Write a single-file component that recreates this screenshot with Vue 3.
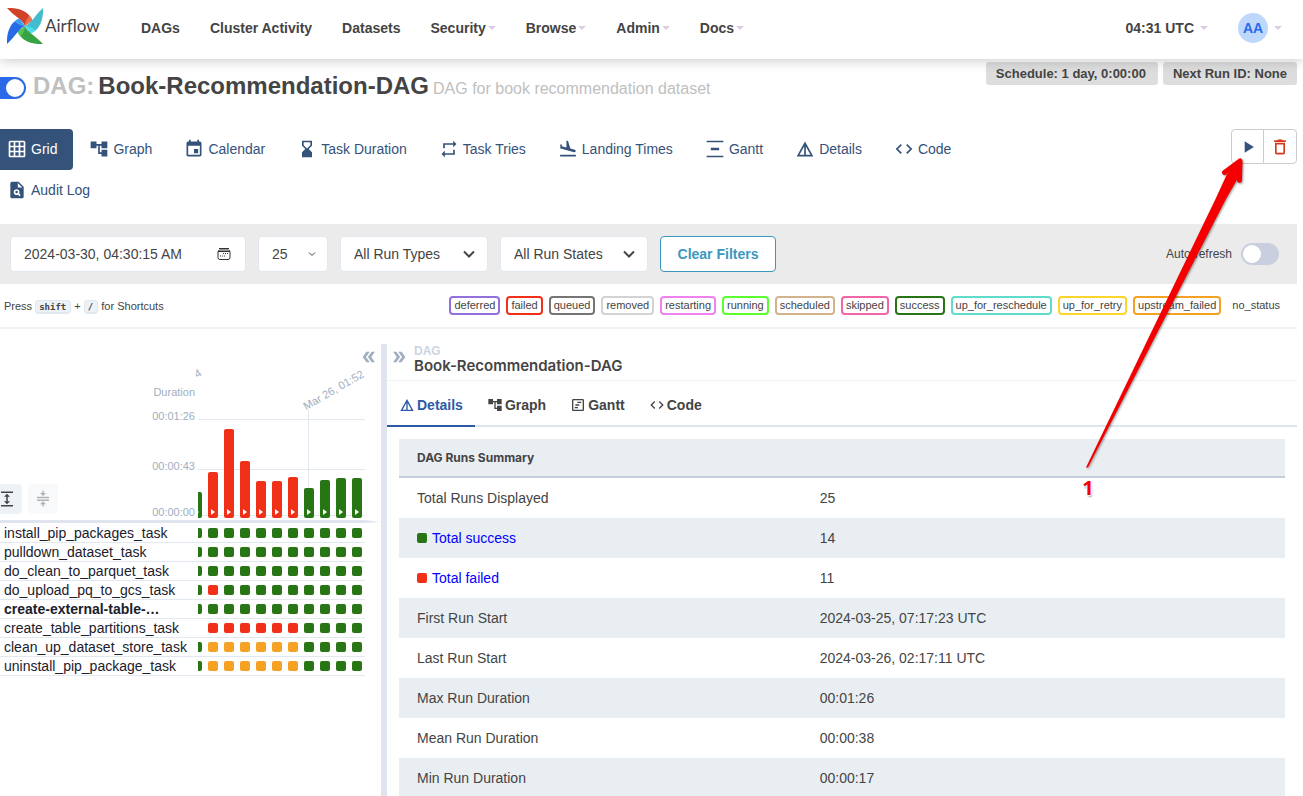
<script setup>
import { ref } from 'vue'

const icons = {
  grid: 'M20 2H4c-1.1 0-2 .9-2 2v16c0 1.1.9 2 2 2h16c1.1 0 2-.9 2-2V4c0-1.1-.9-2-2-2zM8 20H4v-4h4v4zm0-6H4v-4h4v4zm0-6H4V4h4v4zm6 12h-4v-4h4v4zm0-6h-4v-4h4v4zm0-6h-4V4h4v4zm6 12h-4v-4h4v4zm0-6h-4v-4h4v4zm0-6h-4V4h4v4z',
  tree: 'M22 11V3h-7v3H9V3H2v8h7V8h2v10h4v3h7v-8h-7v3h-2V8h2v3z',
  event: 'M17 12h-5v5h5v-5zM16 1v2H8V1H6v2H5c-1.11 0-1.99.9-1.99 2L3 19c0 1.1.89 2 2 2h14c1.1 0 2-.9 2-2V5c0-1.1-.9-2-2-2h-1V1h-2zm3 18H5V8h14v11z',
  hourglass: 'M18 22l-.01-6L14 12l3.99-4.01L18 2H6v6l4 4-4 3.99V22h12zM8 7.5V4h8v3.5l-4 4-4-4z',
  repeat: 'M7 7h10v3l4-4-4-4v3H5v6h2V7zm10 10H7v-3l-4 4 4 4v-3h12v-6h-2v4z',
  landing: 'M2.5 19h19v2h-19zm7.18-5.73l4.35 1.16 5.31 1.42c.8.21 1.62-.26 1.84-1.06.21-.8-.26-1.62-1.06-1.84l-5.31-1.42-2.76-9.02L10.12 2v8.28L5.15 8.95l-.93-2.32-1.45-.39v5.17l1.6.43 5.31 1.43z',
  distribute: 'M22 2v2H2V2h20zM7 10.5v3h10v-3H7zM2 20v2h20v-2H2z',
  details: 'M12 3 2 21h20L12 3zm1 5.92L18.6 19H13V8.92zm-2 0V19H5.4L11 8.92z',
  code: 'M9.4 16.6L4.8 12l4.6-4.6L8 6l-6 6 6 6 1.4-1.4zm5.2 0l4.6-4.6-4.6-4.6L16 6l6 6-6 6-1.4-1.4z',
  audit: 'M14 2H6c-1.1 0-2 .9-2 2v16c0 1.1.89 2 1.99 2H18c1.1 0 2-.9 2-2V8l-6-6zm1.04 17.45l-1.88-1.88c-1.33.71-3.01.53-4.13-.59-1.37-1.37-1.37-3.58 0-4.95s3.58-1.37 4.95 0c1.12 1.12 1.31 2.8.59 4.13l1.88 1.88-1.41 1.41zM13 9V3.5L18.5 9H13zM11.5 13a1.5 1.5 0 1 0 .01 3 1.5 1.5 0 0 0-.01-3z',
  play: 'M8 5v14l11-7z',
  trash: 'M6 19c0 1.1.9 2 2 2h8c1.1 0 2-.9 2-2V7H6v12zM8 9h8v10H8V9zm7.5-5l-1-1h-5l-1 1H5v2h14V4z',
  forward: 'M15.5 5H11l5 7-5 7h4.5l5-7zM8.5 5H4l5 7-5 7h4.5l5-7z',
  back: 'M8.5 5H13l-5 7 5 7H8.5l-5-7zM15.5 5H20l-5 7 5 7h-4.5l-5-7z',
  expand: 'M4 20h16v2H4zM4 2h16v2H4zm9 7h3l-4-4-4 4h3v6H8l4 4 4-4h-3z',
  compress: 'M8 19h3v3h2v-3h3l-4-4-4 4zm8-15h-3V1h-2v3H8l4 4 4-4zM4 9v2h16V9H4zM4 12.500h16v2H4z',
  timeline: 'M19 5v14H5V5h14m0-2H5c-1.100 0-2 .9-2 2v14c0 1.100.9 2 2 2h14c1.100 0 2-.9 2-2V5c0-1.100-.9-2-2-2zM11 7h6v2h-6zM8 11h6v2H8zM7 15h5v2H7z',
}

const menu = [
  { label: 'DAGs' },
  { label: 'Cluster Activity' },
  { label: 'Datasets' },
  { label: 'Security', caret: true },
  { label: 'Browse', caret: true },
  { label: 'Admin', caret: true },
  { label: 'Docs', caret: true },
]

const views = [
  { label: 'Grid', icon: 'grid', active: true },
  { label: 'Graph', icon: 'tree' },
  { label: 'Calendar', icon: 'event' },
  { label: 'Task Duration', icon: 'hourglass' },
  { label: 'Task Tries', icon: 'repeat' },
  { label: 'Landing Times', icon: 'landing' },
  { label: 'Gantt', icon: 'distribute' },
  { label: 'Details', icon: 'details' },
  { label: 'Code', icon: 'code' },
  { label: 'Audit Log', icon: 'audit' },
]

const states = [
  ['deferred', 'mediumpurple'],
  ['failed', '#f03018'],
  ['queued', '#757575'],
  ['removed', 'lightgrey'],
  ['restarting', 'violet'],
  ['running', '#5cff2e'],
  ['scheduled', 'tan'],
  ['skipped', '#f266a8'],
  ['success', '#277515'],
  ['up_for_reschedule', '#5fdccb'],
  ['up_for_retry', '#fbd52b'],
  ['upstream_failed', '#f5a123'],
  ['no_status', 'transparent'],
]

const s = 'success'
const f = 'failed'
const u = 'upstream'
const runs = [
  [26, s], [46, f], [89, f], [57, f], [37, f], [37, f], [41, f], [30, s], [38, s], [40, s], [40, s],
]
const allGood = [s, s, s, s, s, s, s, s, s, s, s]
const tasks = [
  { name: 'install_pip_packages_task', cells: allGood },
  { name: 'pulldown_dataset_task', cells: allGood },
  { name: 'do_clean_to_parquet_task', cells: allGood },
  { name: 'do_upload_pq_to_gcs_task', cells: [s, f, s, s, s, s, s, s, s, s, s] },
  { name: 'create-external-table-…', cells: allGood, group: true },
  { name: 'create_table_partitions_task', cells: ['none', f, f, f, f, f, f, s, s, s, s] },
  { name: 'clean_up_dataset_store_task', cells: [s, u, u, u, u, u, u, s, s, s, s] },
  { name: 'uninstall_pip_package_task', cells: [s, u, u, u, u, u, u, s, s, s, s] },
]

const panels = [
  { label: 'Details', icon: 'details', active: true },
  { label: 'Graph', icon: 'tree' },
  { label: 'Gantt', icon: 'timeline' },
  { label: 'Code', icon: 'code' },
]

const summary = [
  { label: 'Total Runs Displayed', value: '25' },
  { label: 'Total success', value: '14', state: s },
  { label: 'Total failed', value: '11', state: f },
  { label: 'First Run Start', value: '2024-03-25, 07:17:23 UTC' },
  { label: 'Last Run Start', value: '2024-03-26, 02:17:11 UTC' },
  { label: 'Max Run Duration', value: '00:01:26' },
  { label: 'Mean Run Duration', value: '00:00:38' },
  { label: 'Min Run Duration', value: '00:00:17' },
]

const baseDate = ref('2024-03-30, 04:30:15 AM')
const enabled = ref(true)
const autoRefresh = ref(false)
</script>

<template>
  <div class="page">
    <header class="navbar">
      <a class="brand" href="#" aria-label="Airflow">
        <svg class="logo" viewBox="0 0 36 36" aria-hidden="true">
          <path fill="#d14328" d="M0 0C9-.5 18 2 22.500 7.500 21 11 20 14 18 18 15 11 8 9 0 0z" />
          <path fill="#ee6f51" d="M22.500 7.500C25 10 25.500 12 25 13L18 18C18 14 20 10 22.500 7.500z" />
          <path fill="#43bccd" d="M36 0C36.500 9 34 18 28.500 22.500 25 21 22 20 18 18 25 15 27 8 36 0z" />
          <path fill="#4adcf0" d="M28.500 22.500C26 25 24 25.500 23 25L18 18C22 18 26 20 28.500 22.500z" />
          <path fill="#37a344" d="M36 36C27 36.500 18 34 13.500 28.500 15 25 16 22 18 18 21 25 28 27 36 36z" />
          <path fill="#51c455" d="M13.500 28.500C11 26 10.500 24 11 23L18 18C18 22 16 26 13.500 28.500z" />
          <path fill="#2869e6" d="M0 36C-.5 27 2 18 7.500 13.500 11 15 14 16 18 18 11 21 9 28 0 36z" />
          <path fill="#3f9cf0" d="M7.500 13.500C10 11 12 10.500 13 11L18 18C14 18 10 16 7.500 13.500z" />
        </svg>
        <span class="brand-name">Airflow</span>
      </a>
      <nav class="menu">
        <a v-for="m in menu" :key="m.label" href="#">{{ m.label }}<i v-if="m.caret" class="caret"></i></a>
      </nav>
      <nav class="menu user-menu">
        <a href="#">04:31 UTC <i class="caret far"></i></a>
        <a href="#" class="user"><span class="avatar">AA</span><i class="caret far"></i></a>
      </nav>
    </header>

    <div class="content">
      <section class="title-row">
        <input v-model="enabled" class="switch dag-switch" type="checkbox" aria-label="Pause/Unpause DAG" />
        <h1>
          <span class="kind">DAG:</span>
          <span>Book-Recommendation-DAG</span>
          <small>DAG for book recommendation dataset</small>
        </h1>
        <div class="tags">
          <a href="#">Schedule: 1 day, 0:00:00</a>
          <a href="#">Next Run ID: None</a>
        </div>
      </section>

      <section class="view-row">
        <ul class="views">
          <li v-for="v in views" :key="v.label">
            <a href="#" :class="{ active: v.active }">
              <svg class="icon" viewBox="0 0 24 24" aria-hidden="true"><path :d="icons[v.icon]" /></svg>{{ v.label }}
            </a>
          </li>
        </ul>
        <div class="actions">
          <button type="button" aria-label="Trigger DAG">
            <svg class="icon" viewBox="0 0 24 24" aria-hidden="true"><path :d="icons.play" /></svg>
          </button>
          <button type="button" class="danger" aria-label="Delete DAG">
            <svg class="icon" viewBox="0 0 24 24" aria-hidden="true"><path :d="icons.trash" /></svg>
          </button>
        </div>
      </section>

      <section class="filters">
        <div class="field date">
          <input v-model="baseDate" type="text" aria-label="Base date" />
          <svg class="calendar" viewBox="0 0 14 14" aria-hidden="true">
            <path fill="none" stroke="#333" d="M2 1.500h10M1 4.500h12M3 3h8a2 2 0 0 1 2 2v5.500a2 2 0 0 1-2 2H3a2 2 0 0 1-2-2V5a2 2 0 0 1 2-2z" />
            <path fill="#333" d="M6 6h1v1H6zM8 6h1v1H8zM10 6h1v1h-1zM3 8.500h1v1H3zM5 8.500h1v1H5zM7 8.500h1v1H7z" />
          </svg>
        </div>
        <div class="field count">
          <select aria-label="Number of runs"><option>25</option></select>
          <svg class="chevron small" viewBox="0 0 12 12" aria-hidden="true"><path d="M3 4.500l3 3 3-3" /></svg>
        </div>
        <div class="field">
          <select aria-label="Run types"><option>All Run Types</option></select>
          <svg class="chevron" viewBox="0 0 12 12" aria-hidden="true"><path d="M1 3.500l5 5 5-5" /></svg>
        </div>
        <div class="field">
          <select aria-label="Run states"><option>All Run States</option></select>
          <svg class="chevron" viewBox="0 0 12 12" aria-hidden="true"><path d="M1 3.500l5 5 5-5" /></svg>
        </div>
        <button type="button" class="clear">Clear Filters</button>
        <label class="auto">Auto-refresh <input v-model="autoRefresh" class="switch" type="checkbox" /></label>
      </section>

      <section class="legend">
        <p>Press <kbd>shift</kbd> + <kbd>/</kbd> for Shortcuts</p>
        <ul>
          <li v-for="[name, color] in states" :key="name" :style="{ borderColor: color }">{{ name }}</li>
        </ul>
      </section>

      <main class="main">
        <section class="grid-panel">
          <button type="button" class="collapse" aria-label="Hide details">
            <svg viewBox="0 0 24 24" aria-hidden="true"><path :d="icons.back" /></svg>
          </button>
          <div class="chart-row">
            <div class="group-buttons">
              <button type="button" aria-label="Expand all task groups">
                <svg viewBox="0 0 24 24" aria-hidden="true"><path :d="icons.expand" /></svg>
              </button>
              <button type="button" disabled aria-label="Collapse all task groups">
                <svg viewBox="0 0 24 24" aria-hidden="true"><path :d="icons.compress" /></svg>
              </button>
            </div>
            <div class="axis">
              <span>Duration</span>
              <span>00:01:26</span>
              <span>00:00:43</span>
              <span>00:00:00</span>
            </div>
            <div class="chart">
              <i class="line top"></i><i class="line mid"></i><i class="line low"></i><i class="tick"></i>
              <span class="date-label">Mar 26, 01:52</span>
              <span class="date-label earlier">4</span>
              <div class="bars">
                <div v-for="(r, i) in runs" :key="i" class="slot">
                  <div class="bar" :class="r[1]" :style="{ height: r[0] + 'px' }">
                    <svg viewBox="0 0 4 6" aria-hidden="true"><path d="M0 0l4 3-4 3z" /></svg>
                  </div>
                </div>
              </div>
            </div>
          </div>
          <svg class="shadow-line" viewBox="0 0 381 4" preserveAspectRatio="none" aria-hidden="true">
            <path d="M0 0h365l15 2-15 1H0z" />
          </svg>
          <table class="tasks">
            <tbody>
              <tr v-for="t in tasks" :key="t.name">
                <th scope="row" :class="{ group: t.group }">{{ t.name }}</th>
                <td>
                  <div class="cells">
                    <span v-for="(c, i) in t.cells" :key="i" class="slot"><i class="cell" :class="c"></i></span>
                  </div>
                </td>
              </tr>
            </tbody>
          </table>
        </section>

        <section class="detail-panel">
          <div class="crumb">
            <button type="button" class="collapse" aria-label="Hide grid">
              <svg viewBox="0 0 24 24" aria-hidden="true"><path :d="icons.forward" /></svg>
            </button>
            <div>
              <span class="crumb-kind">DAG</span>
              <h2>Book-Recommendation-DAG</h2>
            </div>
          </div>
          <div class="panel-tabs" role="tablist">
            <button v-for="p in panels" :key="p.label" type="button" role="tab" :aria-selected="!!p.active" :class="{ active: p.active }">
              <svg viewBox="0 0 24 24" aria-hidden="true"><path :d="icons[p.icon]" /></svg>{{ p.label }}
            </button>
          </div>
          <table class="summary">
            <thead>
              <tr><th scope="col" colspan="2">DAG Runs Summary</th></tr>
            </thead>
            <tbody>
              <tr v-for="row in summary" :key="row.label">
                <td>
                  <a v-if="row.state" href="#"><i class="cell" :class="row.state"></i>{{ row.label }}</a>
                  <template v-else>{{ row.label }}</template>
                </td>
                <td>{{ row.value }}</td>
              </tr>
            </tbody>
          </table>
        </section>
      </main>
    </div>

    <div class="callout">
      <svg viewBox="0 0 180 320" aria-hidden="true">
        <path d="M6 317.500L136 48 147 24 160 12 158 28 146 49 8 317.500z" />
        <path class="head" d="M144.500 22.500L160 11 159.500 30.500" />
      </svg>
      <span>1</span>
    </div>
  </div>
</template>

<style>
html,
body {
  background: #fff;
}
</style>

<style scoped>
* {
  box-sizing: border-box;
}

.page {
  position: relative;
  display: flex;
  flex-direction: column;
  height: 100vh;
  overflow: hidden;
  color: #444;
  font: 14px/20px "Liberation Sans", Arial, sans-serif;
}

a {
  color: inherit;
  text-decoration: none;
}

button,
input,
select {
  font: inherit;
  color: inherit;
}

button {
  padding: 0;
  border: 0;
  background: none;
  cursor: pointer;
}

ul,
p,
h1,
h2 {
  margin: 0;
  padding: 0;
}

ul {
  list-style: none;
}

svg {
  display: block;
  flex: none;
  fill: currentColor;
}

/* Top navigation */
.navbar {
  position: relative;
  display: flex;
  flex: none;
  align-items: center;
  height: 59px;
  padding: 0 6px 3px 7px;
  background: #fff;
  box-shadow: 0 2px 12px rgba(0, 0, 0, 0.2);
}

.brand {
  display: flex;
  align-items: center;
  gap: 2px;
  width: 119px;
}

.logo {
  width: 36px;
  height: 36px;
  margin-bottom: 4px;
}

.brand-name {
  margin-bottom: 4px;
  font-family: Lato, sans-serif;
  font-size: 17px;
}

.menu {
  display: flex;
  align-items: center;
  font-weight: 700;
}

.menu a {
  display: flex;
  align-items: center;
  padding: 0 15px;
}

.caret {
  margin-left: 2px;
  border: 4px solid transparent;
  border-top-color: #decbe4;
  border-bottom: 0;
}

.caret.far {
  margin-left: 6px;
}

.user-menu {
  margin-left: auto;
}

.avatar {
  width: 30px;
  border-radius: 50%;
  background: #bdd8fb;
  color: #2a6ae9;
  line-height: 30px;
  text-align: center;
}

/* Title */
.content {
  display: flex;
  flex: 1;
  flex-direction: column;
  min-height: 0;
  padding-right: 6px;
}

.title-row {
  display: flex;
  flex: none;
  align-items: flex-start;
  height: 70px;
  padding-top: 3px;
}

.switch {
  position: relative;
  width: 38px;
  height: 22px;
  margin: 0;
  border-radius: 11px;
  background: #c9cfde;
  appearance: none;
}

.switch::before {
  content: "";
  position: absolute;
  top: 2px;
  left: 2px;
  width: 18px;
  height: 18px;
  border-radius: 50%;
  background: #fff;
}

.switch:checked {
  background: #2a6ae9;
}

.switch:checked::before {
  left: 18px;
}

.dag-switch {
  margin: 15px 7px 0 -12px;
}

h1 {
  display: flex;
  align-items: baseline;
  gap: 4px;
  padding-top: 10px;
  font-size: 24px;
  line-height: 28px;
}

h1 .kind,
h1 small {
  color: #c0c0c0;
}

h1 small {
  font-size: 16px;
  font-weight: 400;
}

.tags {
  display: flex;
  gap: 5px;
  margin-left: auto;
}

.tags a {
  padding: 0 10px;
  border-radius: 3px;
  background: #ddd;
  font-size: 13px;
  font-weight: 700;
  line-height: 23px;
}

.tags a:first-child {
  padding-right: 12px;
}

/* View switcher */
.view-row {
  display: flex;
  flex: none;
  align-items: flex-start;
  justify-content: space-between;
  padding-bottom: 13px;
}

.views {
  display: flex;
  flex-wrap: wrap;
  width: 80%;
  margin-left: -9px;
  color: #34527a;
}

.views a {
  display: flex;
  align-items: center;
  gap: 4px;
  height: 41px;
  padding: 0 16px 2px;
  border-radius: 4px;
}

.views a.active {
  background: #34527a;
  color: #fff;
}

.icon {
  width: 20px;
  height: 20px;
}

.actions {
  display: flex;
}

.actions button {
  display: grid;
  place-items: center;
  width: 33px;
  height: 35px;
  border: 1px solid #ccc;
  border-radius: 4px 0 0 4px;
  color: #34527a;
}

.actions .danger {
  width: 34px;
  margin-left: -1px;
  border-radius: 0 4px 4px 0;
  color: #d9391f;
}

/* Filters */
.filters {
  display: flex;
  flex: none;
  align-items: center;
  gap: 12px;
  height: 60px;
  padding: 0 18px 0 10px;
  background: #ebebeb;
}

.field {
  display: flex;
  align-items: center;
  width: 148px;
  height: 36px;
  border: 1px solid #e2e8f0;
  border-radius: 4px;
  background: #fff;
}

.field.date {
  width: 236px;
}

.field.count {
  width: 70px;
}

.field input,
.field select {
  width: 100%;
  min-width: 0;
  height: 100%;
  padding: 0 12px 1px 13px;
  border: 0;
  outline: 0;
  background: none;
  appearance: none;
}

.calendar {
  width: 14px;
  height: 14px;
  margin-right: 14px;
}

.chevron {
  width: 12px;
  height: 12px;
  margin-right: 12px;
  fill: none;
  stroke: #444;
  stroke-width: 2px;
  pointer-events: none;
}

.chevron.small {
  margin-right: 9px;
  stroke-width: 1px;
}

.clear {
  width: 116px;
  height: 36px;
  border: 1px solid #3b97bd;
  border-radius: 4px;
  background: #fff;
  color: #3b97bd;
  font-weight: 700;
}

.auto {
  display: flex;
  align-items: center;
  gap: 9px;
  margin-left: auto;
  font-size: 12px;
}

/* Legend */
.legend {
  display: flex;
  flex: none;
  align-items: center;
  justify-content: space-between;
  height: 45px;
  padding: 0 12px 0 4px;
  border-bottom: 2px solid #edf2f7;
  font-size: 11px;
}

kbd {
  padding: 1px 4px 0 3px;
  border: 1px solid #e2e8f0;
  border-bottom-width: 2px;
  border-radius: 4px;
  background: #edf2f7;
  font: 700 9px/12px "DejaVu Sans Mono", monospace;
}

.legend ul {
  display: flex;
  gap: 6px;
}

.legend li {
  padding: 0 3px;
  border: 2px solid;
  border-radius: 4px;
  line-height: 15px;
}

/* Main split */
.main {
  display: flex;
  flex: 1;
  min-height: 0;
  padding-top: 15px;
}

.grid-panel {
  position: relative;
  flex: none;
  width: 387px;
  border-right: 6px solid #dfe4ee;
}

.collapse {
  color: #a0aec0;
}

.collapse svg {
  width: 18px;
  height: 18px;
}

.grid-panel > .collapse {
  position: absolute;
  top: 4px;
  right: 3px;
}

.chart-row {
  display: flex;
  height: 176px;
}

.group-buttons {
  display: flex;
  flex: 1;
  align-items: flex-end;
  gap: 6px;
  padding-bottom: 6px;
}

.group-buttons button {
  display: grid;
  place-items: center;
  width: 30px;
  height: 30px;
  border-radius: 4px;
  background: #edf2f7;
}

.group-buttons button:first-child {
  margin-left: -8px;
}

.group-buttons button:disabled {
  opacity: 0.4;
}

.group-buttons svg {
  width: 18px;
  height: 18px;
}

.axis {
  display: grid;
  grid-template-rows: 20px 24px 50px 46px;
  align-content: end;
  align-items: end;
  padding-right: 3px;
  color: #a0aec0;
  font-size: 11px;
  line-height: 16px;
  text-align: right;
}

.chart {
  position: relative;
  display: flex;
  align-items: flex-end;
  width: 183px;
  padding: 0 16px 2px 0;
}

.line,
.tick {
  position: absolute;
  left: 0;
  width: 167px;
  height: 1px;
  background: #e2e8f0;
}

.line.top {
  bottom: 100px;
}

.line.mid {
  bottom: 50px;
}

.line.low {
  bottom: 4px;
}

.tick {
  bottom: 2px;
  left: 110px;
  width: 1px;
  height: 108px;
}

.date-label {
  position: absolute;
  bottom: 108px;
  left: 109px;
  color: #a0aec0;
  font-size: 11px;
  line-height: 12px;
  white-space: nowrap;
  transform: rotate(-30deg);
  transform-origin: left bottom;
}

.date-label.earlier {
  bottom: 140px;
  left: 0;
}

.bars,
.cells {
  position: relative;
  display: flex;
  align-items: flex-end;
  justify-content: flex-end;
  width: 167px;
  overflow: hidden;
}

.slot {
  display: flex;
  flex: none;
  justify-content: center;
  width: 16px;
}

.bar {
  display: flex;
  align-items: flex-end;
  justify-content: center;
  width: 10px;
  padding-bottom: 3px;
  border-radius: 2px;
}

.bar svg {
  width: 4px;
  height: 6px;
  fill: #fff;
}

.cell {
  width: 10px;
  height: 10px;
  border-radius: 2px;
}

.success {
  background: #277515;
}

.failed {
  background: #f03018;
}

.upstream {
  background: #f5a123;
}

.shadow-line {
  width: 100%;
  height: 4px;
  color: #dfe4ee;
}

.tasks {
  width: 365px;
  border-spacing: 0;
  table-layout: fixed;
  color: #1a202c;
}

.tasks th,
.tasks td {
  height: 19px;
  padding: 0;
  border-bottom: 1px solid #e2e8f0;
  font-weight: 400;
  line-height: 18px;
  text-align: left;
  vertical-align: middle;
}

.tasks th {
  width: 198px;
  padding-left: 4px;
}

.tasks th.group {
  font-weight: 700;
}

/* Details */
.detail-panel {
  flex: 1;
  min-width: 0;
}

.crumb {
  display: flex;
  align-items: flex-start;
  gap: 6px;
  height: 37px;
  padding-left: 3px;
  border-bottom: 1px solid #edf2f7;
}

.crumb .collapse {
  margin-top: 4px;
}

.crumb-kind {
  display: block;
  color: #cbd5e0;
  font: 700 12px/14px "Liberation Sans", sans-serif;
}

.crumb h2 {
  font: 600 15px/16px Inter, sans-serif;
}

.panel-tabs {
  display: flex;
  height: 46px;
  border-bottom: 2px solid #dfe4ee;
}

.panel-tabs button {
  display: flex;
  align-items: center;
  gap: 2px;
  height: 46px;
  padding: 4px 12px 0;
  border-bottom: 2px solid transparent;
  font-weight: 700;
}

.panel-tabs button.active {
  border-color: #2c5aa8;
  color: #2c5aa8;
}

.panel-tabs svg {
  width: 16px;
  height: 16px;
}

.summary {
  width: calc(100% - 24px);
  margin: 12px 12px 0;
  border-spacing: 0;
}

.summary th {
  height: 39px;
  padding: 0 18px;
  border-bottom: 2px solid #c5cedd;
  background: #e9eef3;
  font: 700 12px/16px Inter, sans-serif;
  text-align: left;
}

.summary td {
  width: 55%;
  height: 40px;
  padding: 0 18px 0 22px;
}

.summary td:first-child {
  width: 45%;
  padding-left: 18px;
}

.summary tbody tr:nth-child(even) {
  background: #e9eef3;
}

.summary a {
  display: flex;
  align-items: center;
  gap: 5px;
  color: #00f;
}

/* Annotation over the page */
.callout {
  position: absolute;
  top: 150px;
  right: 43px;
  width: 180px;
  color: #f40000;
  pointer-events: none;
}

.callout svg {
  filter: drop-shadow(1px 1px 1px rgba(0, 0, 0, 0.4));
}

.callout .head {
  fill: none;
  stroke: currentColor;
  stroke-width: 5px;
  stroke-linecap: round;
  stroke-linejoin: round;
}

.callout span {
  display: block;
  width: 16px;
  margin-top: 8px;
  font: 700 20px/20px "Noto Sans", sans-serif;
  text-align: center;
  text-shadow: 1px 0 #fff, -1px 0 #fff, 0 1px #fff, 1px 2px 2px #999;
}
</style>
